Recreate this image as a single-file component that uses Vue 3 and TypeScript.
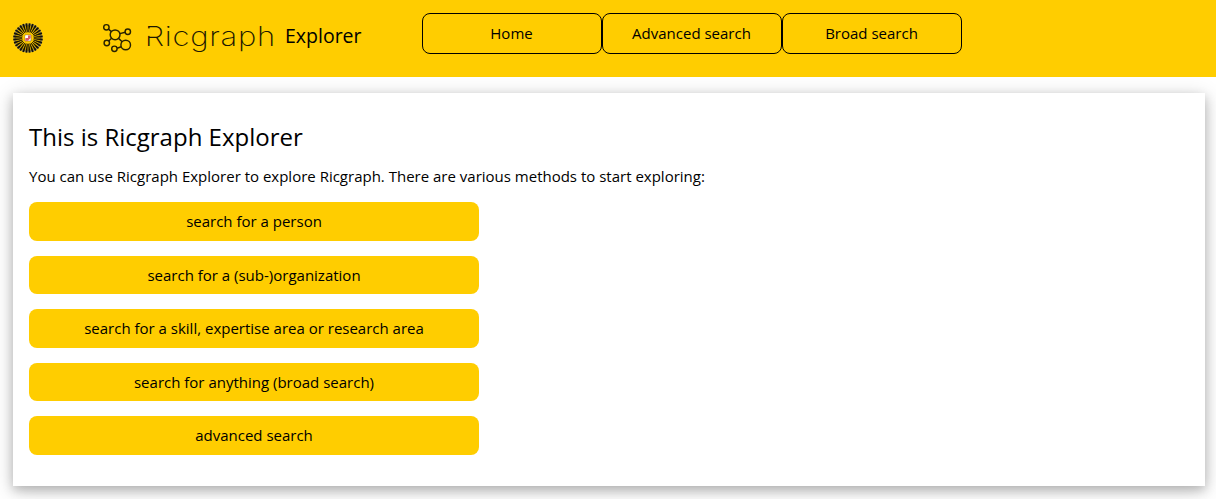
<script setup lang="ts">
interface Ray {
  d: string
  tip: string
}

const navItems: string[] = ['Home', 'Advanced search', 'Broad search']
const methods: string[] = [
  'search for a person',
  'search for a (sub-)organization',
  'search for a skill, expertise area or research area',
  'search for anything (broad search)',
  'advanced search',
]

const point = (radius: number, angle: number): string =>
  `${(radius * Math.cos(angle)).toFixed(2)} ${(radius * Math.sin(angle)).toFixed(2)}`

const rayCount = 28
const rays: Ray[] = Array.from({ length: rayCount }, (_, i) => {
  const a = ((i + 0.5) * 2 * Math.PI) / rayCount
  return {
    d: `M${point(5.8, a)}L${point(12.6, a - 0.055)}L${point(12.6, a + 0.055)}Z`,
    tip: `M${point(12.4, a)}L${point(14.8, a)}`,
  }
})
</script>

<template>
  <div class="page">
    <header class="topbar">
      <svg class="sun" viewBox="-15 -15 30 30" aria-hidden="true">
        <circle r="13.5" fill="none" stroke="#8a815a" stroke-width="2" opacity="0.8" />
        <path v-for="(ray, i) in rays" :key="i" :d="ray.d" fill="#050400" stroke="#050400" stroke-width="0.55" />
        <path v-for="(ray, i) in rays" :key="'t' + i" :d="ray.tip" stroke="#12100a" stroke-width="1.7" />
        <path d="M-3-3H3V3H-3Z" fill="#fff" stroke="#6e4826" stroke-width="0.5" />
        <path d="M-2.6 0H0V-2.6H2.6V0L0 2.7H-2.6Z" fill="#d95a64" />
        <path d="M-2.6-2.6H0.4L-2.6 0.4Z" fill="#fff" />
      </svg>
      <svg class="brand" viewBox="0 0 176 40" role="img" aria-label="Ricgraph">
        <g fill="none" stroke="#292200" stroke-width="1.45">
          <circle cx="6.4" cy="9.3" r="2.7" />
          <circle cx="15.1" cy="16.8" r="4.9" />
          <circle cx="27.8" cy="13.7" r="2.7" />
          <circle cx="6.8" cy="25" r="2.7" />
          <circle cx="25.7" cy="27" r="4.8" />
          <circle cx="14.4" cy="30.8" r="2.7" />
          <path d="M8.4 11.1L11.4 13.6M19.9 15.6L25.2 14.3M8.7 23.1L11.6 20.3M18.5 20.4L22.2 23.7M17.1 30.2L21.2 28.8" />
        </g>
        <text x="44.8" y="28.4" textLength="131" lengthAdjust="spacingAndGlyphs">Ricgraph</text>
        <rect class="stem-gap" x="46" y="10.4" width="4.4" height="7.5" />
      </svg>
      <span class="product">Explorer</span>
      <nav class="nav">
        <a v-for="item in navItems" :key="item" class="nav-item">{{ item }}</a>
      </nav>
    </header>
    <main class="card">
      <h1>This is Ricgraph Explorer</h1>
      <p>You can use Ricgraph Explorer to explore Ricgraph. There are various methods to start exploring:</p>
      <div class="methods">
        <button v-for="method in methods" :key="method" type="button">{{ method }}</button>
      </div>
    </main>
  </div>
</template>

<style>
body {
  margin: 0;
  overflow: hidden;
  background: #fff;
}
</style>

<style scoped>
.page {
  height: 499px;
  overflow: hidden;
  font-family: "Open Sans", sans-serif;
  font-size: 15px;
  line-height: 1.5;
  color: #000;
}
.topbar {
  display: flex;
  align-items: flex-start;
  box-sizing: border-box;
  height: 77px;
  padding: 13px 13px 0;
  background: #ffcd00;
}
.sun {
  width: 30px;
  height: 30px;
  margin-top: 10px;
}
.brand {
  width: 176px;
  height: 40px;
  margin: 5px 0 0 57px;
}
.brand text {
  font-family: Inter, sans-serif;
  font-size: 27px;
  font-weight: 200;
  letter-spacing: 0.6px;
  fill: #1c1800;
}
.stem-gap {
  fill: #ffcd00;
}
.product {
  width: 137px;
  margin: 8px 0 0 9px;
  font-size: 19.5px;
}
.nav {
  display: flex;
}
.nav-item {
  box-sizing: border-box;
  width: 180px;
  height: 41px;
  padding: 8px 1px 0 0;
  border: 1px solid #000;
  border-radius: 8px;
  text-align: center;
}
.card {
  box-sizing: border-box;
  height: 393px;
  margin: 16px 11px 0 13px;
  padding: 26px 16px 0;
  background: #fff;
  box-shadow: 0 4px 10px 0 rgba(0, 0, 0, 0.2), 0 4px 20px 0 rgba(0, 0, 0, 0.19);
}
h1 {
  margin: 0;
  font-size: 24px;
  font-weight: 400;
  line-height: 36px;
}
p {
  margin: 10px 0 14.5px;
}
.methods {
  display: flex;
  flex-direction: column;
  gap: 15px;
  width: 450px;
}
button {
  height: 38.5px;
  padding: 0;
  border: 0;
  border-radius: 8px;
  background: #ffcd00;
  color: #000;
  font: inherit;
}
</style>
